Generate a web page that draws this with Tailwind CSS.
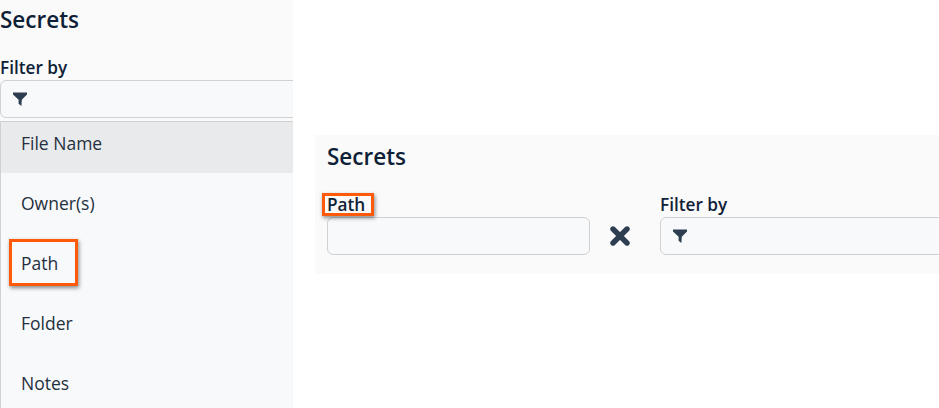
<!DOCTYPE html>
<html lang="en">
<head>
  <meta charset="UTF-8" />
  <title>Secrets</title>
  <script src="https://cdn.jsdelivr.net/npm/@tailwindcss/browser@4"></script>
</head>
<body class="bg-white h-[408px] w-[939px] overflow-hidden flex font-['Open_Sans',sans-serif] text-[#0f2137]">

  <!-- left crop: filter dropdown open -->
  <div class="w-[293px] h-[408px] bg-[#fafafa] overflow-hidden shrink-0">
    <h2 class="text-[22.5px] leading-[28px] font-semibold mt-[6px]">Secrets</h2>
    <label class="block text-[17.2px] leading-[22px] font-semibold mt-[23px]">Filter by</label>
    <div class="h-[38px] w-[320px] mt-[1px] border border-[#d0d1d3] rounded-[6px] bg-[#f8f9fa] flex items-center pl-[12px]">
      <svg class="w-[14px] h-[14px] text-[#2c3e50]" viewBox="0 0 14 14"><path fill="currentColor" d="M0 .5h14v2L8.8 7.8L8.4 14L5.6 11.8V7.8L0 2.5z"/></svg>
    </div>
    <div class="relative mt-[3px] h-[290px] w-[320px] border-l border-t border-[#d0d1d3] bg-[#f8f9fa] text-[#25303e] text-[17.5px]">
      <div class="h-[51px] bg-[#e9eaec] pl-[20px] flex items-start pt-[8px] leading-[26px]">File Name</div>
      <div class="h-[60px] pl-[20px] flex items-center">Owner(s)</div>
      <div class="h-[60px] pl-[20px] flex items-center">Path</div>
      <div class="h-[60px] pl-[20px] flex items-center">Folder</div>
      <div class="h-[60px] pl-[20px] flex items-center">Notes</div>
      <div class="absolute left-[8px] top-[117px] w-[69px] h-[47px] border-[3px] border-[#ff5a0a] shadow-[1px_2px_4px_rgba(0,0,0,0.45)]"></div>
    </div>
  </div>

  <!-- right crop: path filter applied -->
  <div class="relative ml-[22px] mt-[135px] w-[624px] h-[139px] bg-[#fafafa] overflow-hidden pl-[12px] shrink-0">
    <h2 class="text-[22.5px] leading-[28px] font-semibold mt-[8px]">Secrets</h2>
    <div class="flex mt-[21px]">
      <div class="w-[263px] shrink-0">
        <label class="block text-[17.2px] leading-[22px] font-semibold mb-[3px] pt-[2px]">Path</label>
        <div class="h-[38px] -mt-[2px] border border-[#d0d1d3] rounded-[6px] bg-[#f8f9fa]"></div>
      </div>
      <div class="w-[70px] shrink-0 flex items-end justify-center pr-[10px] pb-[9px]">
        <svg class="w-[20px] h-[20px] text-[#2c3e50]" viewBox="0 0 20 20"><path fill="none" stroke="currentColor" stroke-width="5.4" stroke-linecap="round" d="M3 3L17 17M17 3L3 17"/></svg>
      </div>
      <div class="w-[320px] shrink-0">
        <label class="block text-[17.2px] leading-[22px] font-semibold mb-[3px] pt-[2px]">Filter by</label>
        <div class="h-[38px] -mt-[2px] border border-[#d0d1d3] rounded-[6px] bg-[#f8f9fa] flex items-center pl-[12px]">
          <svg class="w-[14px] h-[14px] text-[#2c3e50]" viewBox="0 0 14 14"><path fill="currentColor" d="M0 .5h14v2L8.8 7.8L8.4 14L5.6 11.8V7.8L0 2.5z"/></svg>
        </div>
      </div>
    </div>
    <div class="absolute left-[7px] top-[58px] w-[52px] h-[23px] border-[3px] border-[#ff5a0a] shadow-[1px_2px_4px_rgba(0,0,0,0.45)]"></div>
  </div>

</body>
</html>
